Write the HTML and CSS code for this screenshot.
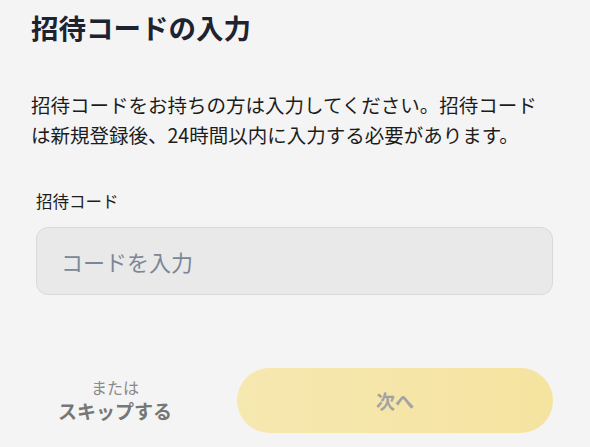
FILE: index.html
```html
<!DOCTYPE html>
<html lang="ja">
<head>
<meta charset="utf-8">
<title>招待コードの入力</title>
<link rel="stylesheet" href="styles.css">
</head>
<body>
<main class="page">
  <h1 class="title">招待コードの入力</h1>
  <p class="lead">招待コードをお持ちの方は入力してください。招待コードは新規登録後、24時間以内に入力する必要があります。</p>
  <div class="field">
    <label class="label" for="code">招待コード</label>
    <input class="input" id="code" type="text" placeholder="コードを入力">
  </div>
  <div class="actions">
    <button class="skip" type="button">
      <span class="skip-or">または</span>
      <span class="skip-main">スキップする</span>
    </button>
    <button class="next" type="button" disabled>次へ</button>
  </div>
</main>
</body>
</html>
```

FILE: styles.css
```css
* { box-sizing: border-box; }
html, body {
  margin: 0;
  background: #f4f4f4;
}
body {
  font-family: "Noto Sans CJK JP", "Noto Sans", sans-serif;
  color: #1c1c1c;
}
.page {
  width: 590px;
  height: 447px;
  padding: 8px 37px 0 31px;
  display: flex;
  flex-direction: column;
}
.title {
  margin: 0;
  font-size: 27.5px;
  line-height: 38px;
  font-weight: 700;
  color: #1e2330;
}
.lead {
  margin: 44px 0 0;
  font-size: 19.5px;
  line-height: 30px;
  color: #1c1c1c;
}
.field {
  margin-top: 40px;
  padding-left: 5px;
  display: flex;
  flex-direction: column;
}
.label {
  font-size: 16.5px;
  line-height: 22px;
  color: #1c1c1c;
}
.input {
  margin-top: 15px;
  height: 68px;
  width: 100%;
  border: 1.5px solid #d9d9d9;
  border-radius: 12px;
  background: #e9e9e9;
  padding: 0 24px;
  font-family: inherit;
  font-size: 22px;
  color: #1c1c1c;
  outline: none;
}
.input::placeholder {
  color: #7a8797;
}
.actions {
  margin-top: 73px;
  display: flex;
  align-items: center;
  gap: 38px;
}
.skip {
  width: 168px;
  border: 0;
  background: none;
  padding: 0;
  font-family: inherit;
  display: flex;
  flex-direction: column;
  align-items: center;
  cursor: pointer;
}
.skip-or {
  font-size: 16px;
  line-height: 21px;
  color: #8a8a8a;
}
.skip-main {
  font-size: 19px;
  line-height: 26px;
  font-weight: 700;
  color: #777777;
}
.next {
  flex: 1;
  height: 65px;
  border: 0;
  border-radius: 33px;
  background: linear-gradient(90deg, #f5e8b0 0%, #f5e3a0 100%);
  font-family: inherit;
  font-size: 19px;
  font-weight: 700;
  color: #a3a3a3;
}
```
